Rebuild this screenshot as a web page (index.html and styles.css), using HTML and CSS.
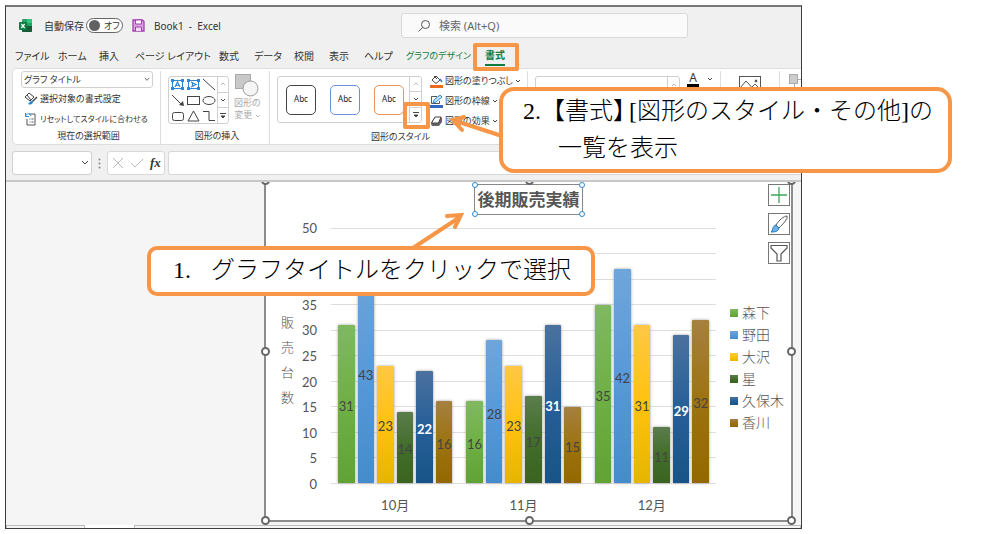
FILE: index.html
```html
<!DOCTYPE html>
<html lang="ja">
<head>
<meta charset="utf-8">
<title>Book1 - Excel</title>
<link rel="stylesheet" href="styles.css">
</head>
<body>
<main class="page">
<div class="window">
  <header class="titlebar">
    <div class="title-left">
      <svg class="logo" width="13" height="13" viewBox="0 0 13 13"><rect x="3" width="10" height="13" rx="1" fill="#21a366"/><path d="M8 0h4a1 1 0 0 1 1 1v3H8z" fill="#33c481"/><path d="M3 7h10v5a1 1 0 0 1-1 1H4a1 1 0 0 1-1-1z" fill="#185c37"/><rect y="3" width="8" height="8" rx="1" fill="#107c41"/><path d="M2.300 5l3.400 4M5.700 5L2.300 9" stroke="#fff" stroke-width="1.200"/></svg>
      <span class="autosave">自動保存</span>
      <button class="toggle" type="button"><i class="knob"></i>オフ</button>
      <button class="bare save" type="button" aria-label="保存"><svg width="13" height="13" viewBox="0 0 13 13"><path d="M1 1h9.500l1.500 1.500V12H1z" fill="#d9a3e0" stroke="#a33fb0" stroke-width="1.300"/><path d="M3.500 1h6v4h-6z" fill="#fff" stroke="#a33fb0"/><path d="M3.500 12V8h6v4" fill="#f0d8f3" stroke="#a33fb0"/></svg></button>
      <span>Book1&nbsp; -&nbsp; Excel</span>
    </div>
    <label class="search"><svg width="14" height="14" viewBox="0 0 14 14" fill="none" stroke="#555"><circle cx="8.500" cy="5.500" r="4"/><path d="M5.700 8.300L1.500 12.500"/></svg><input type="text" placeholder="検索 (Alt+Q)" aria-label="検索"></label>
  </header>
  <nav class="tabs">
    <button type="button">ファイル</button><button type="button">ホーム</button><button type="button">挿入</button><button type="button">ページ レイアウト</button><button type="button">数式</button><button type="button">データ</button><button type="button">校閲</button><button type="button">表示</button><button type="button">ヘルプ</button><button type="button" class="green long">グラフのデザイン</button><button type="button" class="green active">書式</button>
  </nav>
  <section class="ribbon">
    <div class="group g-selection">
      <select class="element" aria-label="グラフ要素"><option>グラフ タイトル</option></select>
      <button class="cmd" type="button"><svg width="14" height="14" viewBox="0 0 14 14" fill="none"><path d="M1 5l4-4 5 4-4 4z" fill="#fff" stroke="#444"/><path d="M3 3l4 5" stroke="#444"/><path d="M13 5L8 10" stroke="#444" stroke-width="1.500"/><path d="M9 9c-2-1-3 1-5 3 2 1 5 1 5-3z" fill="#2b88d8"/></svg>選択対象の書式設定</button>
      <button class="cmd small" type="button"><svg width="14" height="14" viewBox="0 0 14 14" fill="none"><path d="M5 2h6v11H3V7" fill="#fff" stroke="#555"/><path d="M5.500 7h1m1 0h2m-4 3h1m1 0h2" stroke="#555"/><path d="M1.500 1v3.500H5M1.500 4C3 1 6 1 7 4" stroke="#2b88d8"/></svg>リセットしてスタイルに合わせる</button>
      <span class="caption">現在の選択範囲</span>
    </div>
    <div class="group g-insert">
      <div class="row">
        <div class="gallery shapes">
          <svg width="48" height="48" viewBox="0 0 48 48" fill="none" stroke="#444"><g stroke="#2b88d8"><rect x="3.500" y="3.500" width="10" height="8"/><rect x="19.500" y="3.500" width="10" height="8"/><path d="M6 10l2.500-5L11 10M7 8.500h3" stroke-width="1.200"/><path d="M22 5l5 2.500-5 2.500M23.500 6v3" stroke-width="1.200"/></g><path d="M2 2h3v3H2zM12 2h3v3h-3zM2 10h3v3H2zM12 10h3v3h-3zM18 2h3v3h-3zM28 2h3v3h-3zM18 10h3v3h-3zM28 10h3v3h-3z" fill="#2b88d8" stroke="none"/><path d="M34 2l12 11M3 18l9 9"/><path d="M15 29l-5-1 4-4z" fill="#444" stroke="none"/><rect x="18.500" y="19.500" width="12" height="8"/><ellipse cx="40" cy="23.500" rx="6" ry="4"/><rect x="3.500" y="35.500" width="11" height="8" rx="2"/><path d="M24.500 34l5.500 10H19zM34 34.500h6v9h6"/></svg>
          <div class="spin"><button type="button" class="off" aria-label="前へ"><svg class="chev" viewBox="0 0 6 4"><path d="M1 3l2-2 2 2"/></svg></button><button type="button" aria-label="次へ"><svg class="chev" viewBox="0 0 6 4"><path d="M1 1l2 2 2-2"/></svg></button><button type="button" aria-label="その他"><svg class="more" viewBox="0 0 6 6"><path d="M0 .5h6M1 3l2 2 2-2z"/></svg></button></div>
        </div>
        <button class="change" type="button"><svg width="24" height="24" viewBox="0 0 24 24"><rect x=".5" y="1.500" width="15" height="14" fill="#c8c8c8" stroke="#aaa"/><circle cx="15.500" cy="15.500" r="7.500" fill="#f5f5f5" stroke="#999"/></svg><span>図形の</span><span>変更 <svg class="chev" viewBox="0 0 6 4"><path d="M1 1l2 2 2-2"/></svg></span></button>
      </div>
      <span class="caption">図形の挿入</span>
    </div>
    <div class="group g-styles">
      <div class="row">
        <div class="gallery styles">
          <button type="button" class="abc">Abc</button><button type="button" class="abc blue">Abc</button><button type="button" class="abc orange">Abc</button>
          <div class="spin"><button type="button" class="off" aria-label="前へ"><svg class="chev" viewBox="0 0 6 4"><path d="M1 3l2-2 2 2"/></svg></button><button type="button" aria-label="次へ"><svg class="chev" viewBox="0 0 6 4"><path d="M1 1l2 2 2-2"/></svg></button><button type="button" aria-label="その他"><svg class="more" viewBox="0 0 6 6"><path d="M0 .5h6M1 3l2 2 2-2z"/></svg></button></div>
        </div>
        <div class="cmds">
          <button class="cmd" type="button"><svg width="13" height="13" viewBox="0 0 13 13" fill="none"><path d="M2 5l4-4 4 4-4 3.500zM4 1l3 3" stroke="#444"/><path d="M10 4l2 3" stroke="#2b88d8" stroke-width="1.500"/><path d="M0 10h13v3H0z" fill="#ed6b1c"/></svg>図形の塗りつぶし<svg class="chev" viewBox="0 0 6 4"><path d="M1 1l2 2 2-2"/></svg></button>
          <button class="cmd" type="button"><svg width="13" height="13" viewBox="0 0 13 13" fill="none"><path d="M7 1.500H1.500v7h8V6" stroke="#555"/><path d="M3 8l1-3 6-5 2 2-6 5z" fill="#c7e3f7" stroke="#2b88d8"/><path d="M0 10h13v3H0z" fill="#3566c0"/></svg>図形の枠線<svg class="chev" viewBox="0 0 6 4"><path d="M1 1l2 2 2-2"/></svg></button>
          <button class="cmd" type="button"><svg width="13" height="13" viewBox="0 0 13 13"><path d="M5 2h6l1 1v4l-3 4H2L1 9l1-3z" fill="#666"/><path d="M5 2h6L8.500 8H1.500z" fill="#fff" stroke="#444"/></svg>図形の効果<svg class="chev" viewBox="0 0 6 4"><path d="M1 1l2 2 2-2"/></svg></button>
        </div>
      </div>
      <span class="caption">図形のスタイル</span>
    </div>
    <div class="group g-wordart">
      <div class="row">
        <div class="gallery word"><div class="spin"><button type="button" class="off" aria-label="前へ"><svg class="chev" viewBox="0 0 6 4"><path d="M1 3l2-2 2 2"/></svg></button></div></div>
        <button class="bare font" type="button"><span>A</span><svg class="chev" viewBox="0 0 6 4"><path d="M1 1l2 2 2-2"/></svg></button>
      </div>
    </div>
    <div class="group g-alt"><svg width="22" height="20" viewBox="0 0 22 20" fill="none" stroke="#555"><rect x=".5" y=".5" width="21" height="18"/><path d="M1 12l6-7 11 12M13 11l3-3 5 5"/><circle cx="17" cy="5" r="1" fill="#444"/></svg></div>
    <div class="group g-arrange"><svg width="13" height="14" viewBox="0 0 13 14"><rect x="5.500" y="5.500" width="10" height="8" fill="#fff" stroke="#aaa"/><rect x=".5" y=".5" width="8" height="9" fill="#ccc" stroke="#aaa"/></svg></div>
  </section>
  <section class="formula">
    <select class="namebox" aria-label="名前ボックス"><option></option></select>
    <svg width="3" height="11" viewBox="0 0 3 11" fill="#888"><circle cx="1.500" cy="1.500" r="1"/><circle cx="1.500" cy="5.500" r="1"/><circle cx="1.500" cy="9.500" r="1"/></svg>
    <div class="fx"><svg width="10" height="10" viewBox="0 0 10 10"><path d="M0 0l10 10M10 0L0 10"/></svg><svg width="12" height="10" viewBox="0 0 12 10"><path d="M0 5l4 4 8-8"/></svg><em>fx</em></div>
    <input class="entry" type="text" aria-label="数式バー">
  </section>
  <section class="sheet">
    <figure class="chart">
      <figcaption class="chart-title">後期販売実績<i class="dot tl"></i><i class="dot tr"></i><i class="dot bl"></i><i class="dot br"></i></figcaption>
      <div class="axis-title"><span>販</span><span>売</span><span>台</span><span>数</span></div>
      <div class="scale"><span>50</span><span></span><span></span><span>35</span><span>30</span><span>25</span><span>20</span><span>15</span><span>10</span><span>5</span><span>0</span></div>
      <div class="plot">
        <div class="cluster"><b class="bar s1" style="height:62%">31</b><b class="bar s2" style="height:86%">43</b><b class="bar s3" style="height:46%">23</b><b class="bar s4" style="height:28%">14</b><b class="bar s5" style="height:44%">22</b><b class="bar s6" style="height:32%">16</b></div>
        <div class="cluster"><b class="bar s1" style="height:32%">16</b><b class="bar s2" style="height:56%">28</b><b class="bar s3" style="height:46%">23</b><b class="bar s4" style="height:34%">17</b><b class="bar s5" style="height:62%">31</b><b class="bar s6" style="height:30%">15</b></div>
        <div class="cluster"><b class="bar s1" style="height:70%">35</b><b class="bar s2" style="height:84%">42</b><b class="bar s3" style="height:62%">31</b><b class="bar s4" style="height:22%">11</b><b class="bar s5" style="height:58%">29</b><b class="bar s6" style="height:64%">32</b></div>
      </div>
      <ul class="legend"><li><i class="s1"></i>森下</li><li><i class="s2"></i>野田</li><li><i class="s3"></i>大沢</li><li><i class="s4"></i>星</li><li><i class="s5"></i>久保木</li><li><i class="s6"></i>香川</li></ul>
      <div class="months"><span>10月</span><span>11月</span><span>12月</span></div>
      <div class="tools">
        <button type="button" aria-label="グラフ要素"><svg width="20" height="20" viewBox="0 0 20 20"><path d="M10 2v16M2 10h16" stroke="#3fa65a" stroke-width="1.300"/></svg></button>
        <button type="button" aria-label="グラフ スタイル"><svg width="20" height="20" viewBox="0 0 20 20"><path d="M7 11C10 6 15 2 18 2c1 3-4 8-8 12z" fill="#fff" stroke="#555"/><path d="M2 18c2-1 1-6 5-7l3 3c-1 4-5 4-8 4z" fill="#6bb3ea" stroke="#1f6fb5"/></svg></button>
        <button type="button" aria-label="グラフ フィルター"><svg width="20" height="20" viewBox="0 0 20 20"><path d="M2 2.500h16V5l-6 6v7H8v-7L2 5z" fill="#fff" stroke="#555" stroke-width="1.200"/></svg></button>
      </div>
      <i class="handle h-nw"></i><i class="handle h-n"></i><i class="handle h-ne"></i><i class="handle h-w"></i><i class="handle h-e"></i><i class="handle h-sw"></i><i class="handle h-s"></i><i class="handle h-se"></i>
    </figure>
    <div class="sheet-tabs"><i></i><i class="current"></i><i></i></div>
  </section>
</div>
<div class="mark mark-tab"></div>
<div class="mark mark-more"></div>
<svg class="arrows" width="540" height="260" viewBox="0 0 540 260"><path d="M413 248L460 217M447 216l14-1-6 12M502 136L456 121M464 117l-11 3 9 10"/></svg>
<p class="callout one"><span class="num">1.</span>グラフタイトルをクリックで選択</p>
<p class="callout two">2.【書式<span class="half">】</span>[図形のスタイル・その他]の<span class="second">一覧を表示</span></p>
</main>
</body>
</html>
```
FILE: styles.css
```css
* { box-sizing: border-box; }
body { margin: 0; background: #fff; color: #333; font: 10px/14px "Noto Sans", "Noto Sans CJK JP", sans-serif; font-feature-settings: "palt"; }
button, input, select { font: inherit; font-feature-settings: inherit; color: inherit; margin: 0; padding: 0; }
button { background: none; border: 0; white-space: nowrap; }
svg { flex: none; display: block; }
.page { position: relative; padding: 5px 205px 5px 5px; }
.window { display: flex; flex-direction: column; border: 1px solid #3c3c3c; border-top: 2px solid #777; background: #f0f0f0; overflow: hidden; }

.titlebar { display: grid; grid-template-columns: 395fr 287fr 113fr; align-items: center; height: 37px; }
.title-left { display: flex; align-items: center; padding-left: 13px; white-space: nowrap; }
.autosave { width: 42px; margin-left: 12px; }
.toggle { display: flex; align-items: center; gap: 4px; width: 37px; height: 15px; border: 1px solid #666; border-radius: 8px; padding-left: 2px; background: #fff; font-size: 9px; }
.knob { width: 11px; height: 11px; border-radius: 50%; background: #616161; }
.save { margin: 0 9px; }
.search { display: flex; align-items: center; gap: 8px; height: 25px; padding-left: 15px; background: #fafafa; border: 1px solid #d8d8d8; border-radius: 3px; }
.search input { flex: 1; min-width: 0; border: 0; background: none; font-size: 11px; }
.search input::placeholder { color: #666; opacity: 1; }

.tabs { display: grid; grid-template-columns: 43px 41px 36px 84px 35px 40px 35px 35px 42px 79px 22px; height: 24px; padding-left: 9px; align-items: center; }
.tabs button { text-align: left; height: 20px; }
.tabs .green { color: #107c41; }
.tabs .long { font-size: 9px; }
.tabs .active { font-weight: 700; justify-self: start; border-bottom: 2px solid #107c41; }

.ribbon { display: flex; height: 77px; margin-left: 6px; background: #fff; border: 1px solid #ddd; border-right: 0; border-radius: 5px 0 0 5px; overflow: hidden; }
.group { position: relative; display: flex; flex-direction: column; justify-content: space-between; flex: none; padding: 0 4px 2px 8px; border-right: 1px solid #ddd; margin-top: 2px; }
.group .row { display: flex; align-items: flex-start; }
.caption { text-align: center; font-size: 9px; line-height: 12px; }
.g-selection { width: 148px; }
.g-insert { width: 109px; }
.g-styles { width: 258px; }
.g-wordart { width: 193px; }
.g-alt { width: 59px; padding: 5px 0 0 18px; }
.g-arrange { flex: 1; padding: 3px 0 0 9px; border: 0; }
.element, .namebox { appearance: none; border: 1px solid #d0d0d0; border-radius: 3px; background: #fff url("data:image/svg+xml,%3Csvg xmlns='http://www.w3.org/2000/svg' width='8' height='6' fill='none' stroke='%23444'%3E%3Cpath d='M1 1l3 3 3-3'/%3E%3C/svg%3E") no-repeat right 2px center; }
.element { width: 132px; height: 17px; padding-left: 2px; font-size: 9px; background-size: 6px 5px; }
.cmd { display: flex; align-items: center; gap: 2px; height: 18px; padding-left: 3px; font-size: 9px; }
.small { font-size: 8px; }
.cmds .cmd { height: 20px; padding: 0; }
.chev { display: inline-block; width: 6px; height: 4px; fill: none; stroke: #444; }
.more { width: 6px; height: 6px; fill: #444; stroke: #444; }
.gallery { display: flex; border: 1px solid #d0d0d0; border-radius: 3px; }
.spin { display: flex; flex-direction: column; width: 12px; margin-left: auto; border-left: 1px solid #d0d0d0; }
.spin button { display: grid; place-items: center; flex: 1; border-bottom: 1px solid #d0d0d0; }
.spin button:last-child { border-bottom: 0; }
.off .chev, .change .chev { stroke: #bbb; }
.shapes { width: 61px; height: 48px; margin: 5px 0 0 -1px; }
.change { display: flex; flex-direction: column; align-items: center; margin: 2px 0 0 5px; color: #aaa; font-size: 9px; line-height: 12px; }
.styles { width: 145px; height: 47px; margin: 5px 8px 0 -1px; padding-left: 8px; align-items: center; }
.styles .spin { align-self: stretch; }
.abc { width: 30px; height: 30px; flex: none; border: 1px solid #444; border-radius: 5px; font-size: 8px; line-height: 26px; padding-bottom: 2px; color: #222; }
.abc + .abc { margin-left: 14px; }
.abc.blue { border-color: #6d8fd6; }
.abc.orange { border-color: #f0915a; }
.word { width: 145px; height: 47px; margin: 5px 7px 0 -1px; }
.word .spin { height: 16px; }
.bare { display: flex; align-items: center; }
.font { gap: 8px; }
.font span { width: 12px; border-bottom: 3px solid #000; font-size: 12px; line-height: 13px; }

.formula { display: flex; align-items: center; height: 24px; margin: 6px 0 5px 6px; }
.namebox { width: 80px; height: 24px; }
.formula > svg { margin: 0 6px; }
.fx { display: flex; align-items: center; gap: 8px; width: 58px; height: 24px; padding-left: 5px; background: #fff; border: 1px solid #d8d8d8; border-radius: 3px; }
.fx svg { fill: none; stroke: #bbb; }
.fx em { font: italic 700 13px "Liberation Serif", serif; margin-left: -1px; }
.entry { flex: 1; min-width: 0; height: 24px; margin-left: 3px; border: 1px solid #d8d8d8; border-right: 0; border-radius: 3px 0 0 3px; background: #fff; }

.sheet { background: #f5f5f5; border-top: 2px solid #c8c8c8; overflow: hidden; }
.chart { position: relative; display: grid; grid-template-columns: 14px 22px 14px 1fr 75px; grid-template-rows: 33px 13px 256px 36px; margin: 0 8px 3px 258px; padding-left: 15px; background: #fff; border: 2px solid #8c8c8c; border-width: 0 2px 2px; font-family: Lato, "Noto Sans CJK JP", sans-serif; font-size: 13px; font-weight: 300; color: #555; font-feature-settings: normal; }
.chart-title { position: relative; grid-area: 1 / 1 / 2 / 6; justify-self: center; margin: 2px 15px 0 0; height: 31px; width: 109px; border: 1px solid #888; font-size: 17px; line-height: 29px; font-weight: 700; text-align: center; white-space: nowrap; }
.dot { position: absolute; width: 6px; height: 6px; border: 1px solid #2b88d8; border-radius: 50%; background: #fff; }
.tl, .tr { top: -3px; } .bl, .br { bottom: -3px; } .tl, .bl { left: -3px; } .tr, .br { right: -3px; }
.axis-title { grid-area: 3 / 1; align-self: center; display: flex; flex-direction: column; line-height: 25px; margin-top: 7px; }
.scale { grid-area: 3 / 2; display: flex; flex-direction: column; justify-content: space-between; margin: -8px 0; text-align: right; font-weight: 400; }
.scale span { height: 16px; line-height: 16px; }
.plot { grid-area: 3 / 4; display: grid; grid-template-columns: repeat(3, 1fr); border-bottom: 1px solid #ddd; background: repeating-linear-gradient(#ddd 0 1px, transparent 1px 10%); }
.cluster { display: flex; align-items: flex-end; gap: 3px; padding: 0 7px; }
.bar { flex: 1; display: flex; align-items: center; justify-content: center; padding-top: 4px; font-size: 13px; font-weight: 400; color: #444; border-radius: 1px 1px 0 0; box-shadow: 0 0 3px #999; }
.s1 { background: linear-gradient(#80b860, #6fb044 50%, #61a235); }
.s2 { background: linear-gradient(#70a5da, #5899d8 50%, #468cca); }
.s3 { background: linear-gradient(#ffc746, #ffc20d 50%, #e6b500); }
.s4 { background: linear-gradient(#5b7d4c, #426d2b 50%, #3a641f); }
.s5 { background: linear-gradient(#4b719f, #265f98 50%, #185487); }
.s6 { background: linear-gradient(#a58041, #9d7310 50%, #946800); }
.bar.s5 { color: #fff; font-weight: 700; }
.legend { grid-area: 3 / 5; align-self: center; list-style: none; margin: 23px 0 0 14px; padding: 0; font-size: 14px; }
.legend li { display: flex; align-items: center; gap: 4px; height: 21px; white-space: nowrap; }
.legend li + li { margin-top: 1px; }
.legend i { width: 8px; height: 8px; }
.months { grid-area: 4 / 4; display: grid; grid-template-columns: repeat(3, 1fr); align-items: center; text-align: center; padding-top: 6px; font-weight: 400; }
.tools { position: absolute; top: 2px; right: 1px; display: flex; flex-direction: column; gap: 7px; }
.tools button { width: 22px; height: 22px; border: 1px solid #777; background: #fff; }
.handle { position: absolute; width: 9px; height: 9px; border: 2px solid #666; border-radius: 50%; background: #fff; }
.h-nw, .h-n, .h-ne { top: -6px; } .h-w, .h-e { top: calc(50% - 4px); } .h-sw, .h-s, .h-se { bottom: -5px; }
.h-nw, .h-w, .h-sw { left: -5px; } .h-n, .h-s { left: calc(50% - 4px); } .h-ne, .h-e, .h-se { right: -5px; }
.sheet-tabs { display: grid; grid-template-columns: 79px 49px 1fr; height: 3px; }
.sheet-tabs i { border: 1px solid #bbb; border-width: 1px 1px 0; }
.sheet-tabs .current { background: #fff; border: 0; }

.mark { position: absolute; border: 4px solid #f79646; border-radius: 2px; }
.mark-tab { left: 473px; top: 43px; width: 46px; height: 28px; }
.mark-more { left: 403px; top: 102px; width: 27px; height: 27px; }
.arrows { position: absolute; left: 0; top: 0; fill: none; stroke: #f79646; stroke-width: 4; stroke-linecap: round; }
.callout { position: absolute; margin: 0; border: 4px solid #f79646; background: #fff; color: #000; font: 300 24px/37px "Liberation Serif", "Noto Sans CJK JP", serif; font-feature-settings: normal; white-space: nowrap; }
.one { left: 147px; top: 246px; width: 448px; padding: 2px 0 3px 22px; border-radius: 10px; }
.num { display: inline-block; width: 38px; }
.two { left: 499px; top: 87px; width: 453px; padding: 2px 0 2px 20px; border-radius: 15px; }
.half { font-feature-settings: "halt"; margin-right: 4px; }
.second { display: block; padding-left: 35px; }
```
